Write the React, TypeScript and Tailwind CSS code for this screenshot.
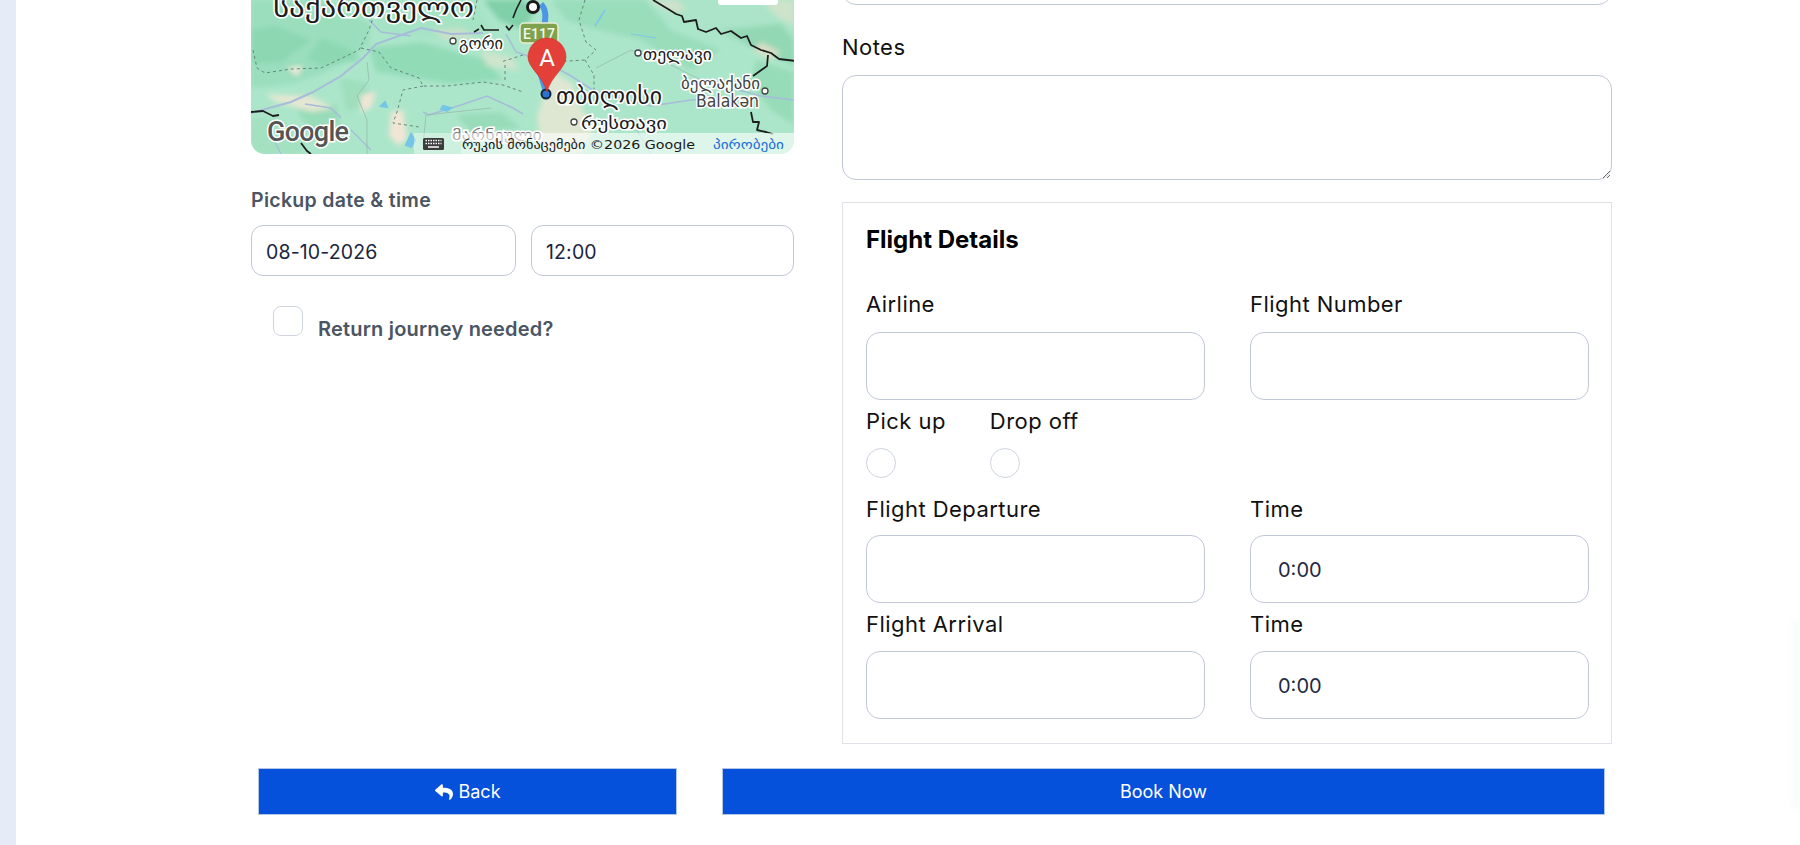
import { FaReply } from "react-icons/fa";

const inputClass =
  "h-[68px] w-full rounded-[14px] border border-[#c2c8d8] bg-white px-[27px] pt-[2px] text-[20px] text-[#1f2a44] outline-none";
const labelClass = "block text-[22px] leading-[30px] tracking-[0.45px] text-[#111111]";
const dateClass =
  "h-[51px] rounded-[12px] border border-[#c2c8d8] px-[14px] pt-[2px] text-[19.5px] tracking-[0.15px] text-[#1a2540] outline-none";

function MapLabel(props: {
  x: number;
  y: number;
  size: number;
  children: string;
  fill?: string;
  width?: number;
}) {
  return (
    <text
      x={props.x}
      y={props.y}
      fontSize={props.size}
      fontFamily="DejaVu Sans, sans-serif"
      fill={props.fill || "#1c1c1c"}
      stroke="#ffffff"
      strokeWidth={3}
      paintOrder="stroke"
      textLength={props.width}
      lengthAdjust="spacingAndGlyphs"
    >
      {props.children}
    </text>
  );
}

function TownDot({ x, y }: { x: number; y: number }) {
  return <circle cx={x} cy={y} r={3} fill="#ffffff" stroke="#444444" strokeWidth={1.3} />;
}

function MapView() {
  return (
    <div className="h-[154px] w-full overflow-hidden rounded-b-[14px]">
      <svg width="543" height="154" viewBox="0 0 543 154" className="block">
        <defs>
          <filter id="soft" x="-10%" y="-10%" width="120%" height="120%">
            <feGaussianBlur stdDeviation="2.5" />
          </filter>
        </defs>
        <rect width="543" height="154" fill="#ace6ca" />
        <g filter="url(#soft)">
          <path d="M0 0H70L120 24L118 45L95 62L70 74L40 84L0 88Z" fill="#9adebd" />
          <path d="M0 30L24 26L60 40L30 62L0 64Z" fill="#8dd7b2" />
          <path d="M70 38L100 50L110 60L70 66L56 58Z" fill="#8dd8b3" />
          <path d="M118 48L170 42L235 60L252 80L200 84L150 76L125 72Z" fill="#92dbb7" />
          <path d="M130 0H225L240 30L180 38L125 30Z" fill="#a4e3c4" />
          <path d="M232 0H272L285 10L272 30L248 20Z" fill="#80d0a9" />
          <path d="M300 0H395L420 30L470 50L440 70L390 40L340 28L315 20Z" fill="#99ddbb" />
          <path d="M395 0H543V60L510 50L450 30Z" fill="#abe4c8" />
          <path d="M470 30L530 24L543 40V66L505 50Z" fill="#92d8b4" />
          <path d="M505 60L543 72V125L520 110L500 85Z" fill="#97dcb8" />
          <path d="M0 118L28 118L52 145V154H0Z" fill="#a3e1c1" />
          <path d="M45 110L85 104L90 125L60 130Z" fill="#98dcb9" />
          <path d="M88 78L115 82L120 105L95 112Z" fill="#9fdfbe" />
          <path d="M205 115L250 112L270 128L220 132Z" fill="#98dcb9" />
          <path d="M230 50L262 58L268 70L235 66Z" fill="#e6e4cf" opacity="0.6" />
          <path d="M300 70L322 84L330 108L345 125L330 154H292L286 118Z" fill="#efe7d4" opacity="0.75" />
          <path d="M15 94L60 96L82 108L62 112L25 102Z" fill="#efe7d4" opacity="0.85" />
          <path d="M110 95L125 92L120 108L110 112Z" fill="#f0e5d5" />
          <path d="M140 112L152 110L156 138L148 146L138 136Z" fill="#f1e6d6" />
          <path d="M36 68L52 66L46 76Z" fill="#f1e9da" />
          <path d="M180 30L210 28L225 38L195 40Z" fill="#e3ddc9" opacity="0.6" />
          <path d="M510 42L530 52L520 60L502 50Z" fill="#e9dfc9" opacity="0.8" />
          <path d="M395 0H425L436 10L420 12Z" fill="#e8e0cd" opacity="0.6" />
          <path d="M510 0H543V26L525 16Z" fill="#e6e2cc" opacity="0.6" />
        </g>
        <g fill="none" stroke="#a6bcda" strokeWidth="1.5">
          <path d="M0 113L40 102L62 92L90 76L112 58L125 44L170 28L200 34L232 33" strokeWidth="2" />
          <path d="M118 20L130 32L160 36" />
          <path d="M54 104L80 108L90 118" />
          <path d="M172 112L178 115L210 105L236 96L262 108L272 114" />
          <path d="M255 34L265 52L295 62L320 76L345 92" />
          <path d="M345 92L400 106L440 100L470 98" />
          <path d="M100 130L120 150M18 130L30 154" strokeWidth="1.2" />
          <path d="M480 88L510 96L543 100" />
          <path d="M345 128L380 120L400 154" strokeWidth="1" />
        </g>
        <g fill="none" stroke="#93b3aa" strokeWidth="0.7">
          <path d="M116 62L118 80L106 96L116 120L116 154" />
          <path d="M172 145L175 115L240 108" />
          <path d="M345 68L380 50L420 65L470 90" />
        </g>
        <path d="M354 10L344 26" stroke="#7cc6ee" strokeWidth="1.5" fill="none" />
        <path d="M380 34L405 38" stroke="#7cc6ee" strokeWidth="1" fill="none" />
        <path d="M134 102L130 106L136 107Z M192 106L200 108L196 111L190 109Z M160 134L164 140L160 147L155 145Z" fill="#74c5e6" stroke="#74c5e6" strokeWidth="2" />
        <g fill="none" stroke="#5f7c74" strokeWidth="0.9" strokeDasharray="3 3">
          <path d="M2 50L6 68L14 73L40 69L70 68L108 50L118 30L122 18" />
          <path d="M110 48L128 52L140 68L168 78L172 86L196 86L232 82L252 85L272 92" />
          <path d="M172 86L152 90L146 112L142 123L168 127" />
          <path d="M226 0L222 20M254 65L254 80" />
          <path d="M334 0L328 20L335 42L345 50L334 60L300 62" />
          <path d="M272 55L250 62" />
          <path d="M334 60L343 75L343 90" />
        </g>
        <g fill="none" stroke="#1d1d1d" strokeWidth="1.8" strokeLinejoin="round">
          <path d="M402 0L417 9L425 14L431 16L433 22L445 20L447 29L455 32L465 28L470 34L480 31L490 38L496 36L500 45L510 50L520 53L528 59L545 61" />
          <path d="M517 55L516 66L502 76" />
          <path d="M500 112L502 122L508 122L506 130L515 132L522 134" />
          <path d="M0 112L12 111L22 116L28 115" />
          <path d="M50 143L56 151L60 154" />
          <path d="M223 32L228 29M230 25L233 30L248 30M255 26L258 30L262 25M270 0L265 10L262 18" strokeWidth="1.6" />
        </g>
        <path d="M290 4C296 10 295 20 292 30L292 42M288 68L295 92" stroke="#4d96e6" strokeWidth="6" fill="none" />
        <rect x="269" y="23" width="38" height="20" rx="4" fill="#7fa24e" stroke="#e9efd6" strokeWidth="1.5" />
        <text x="288" y="38.500" fontSize="14" textAnchor="middle" fill="#f4f7e8" fontFamily="Roboto, sans-serif" fontWeight="500">
          E117
        </text>
        <circle cx="282" cy="7" r="5.5" fill="#ffffff" stroke="#1a1a1a" strokeWidth="3" />
        <circle cx="295" cy="94" r="4.5" fill="#2a73cf" stroke="#10263f" strokeWidth="2" />
        <path d="M296 92C292 76 277 68 277 57A19 19 0 0 1 315 57C315 68 300 76 296 92Z" fill="#e4403a" stroke="#c9302c" strokeWidth="0.6" />
        <text x="296" y="66" fontSize="24" textAnchor="middle" fill="#ffffff" fontFamily="Roboto, sans-serif">
          A
        </text>
        <MapLabel x={22} y={17} size={27} width={201}>საქართველო</MapLabel>
        <TownDot x={202} y={41} />
        <MapLabel x={208} y={49} size={16} width={44}>გორი</MapLabel>
        <TownDot x={387} y={53} />
        <MapLabel x={392} y={60} size={16} width={69}>თელავი</MapLabel>
        <MapLabel x={430} y={89} size={16} width={79} fill="#444444">ბელაქანი</MapLabel>
        <TownDot x={514} y={91} />
        <MapLabel x={445} y={107} size={17} width={63} fill="#444444">Balakən</MapLabel>
        <MapLabel x={305} y={104} size={23} width={106}>თბილისი</MapLabel>
        <TownDot x={323} y={122} />
        <MapLabel x={330} y={129} size={16} width={86}>რუსთავი</MapLabel>
        <MapLabel x={201} y={140} size={15} width={90} fill="#777777">მარნეული</MapLabel>
        <text x="16" y="141" fontSize="27" fontWeight="500" fontFamily="Roboto, sans-serif" fill="#555555" stroke="#ffffff" strokeWidth="3" paintOrder="stroke" textLength="82">
          Google
        </text>
        <rect x="163" y="133" width="47" height="21" fill="#ffffff" opacity="0.4" />
        <rect x="210" y="133" width="238" height="21" fill="#ffffff" opacity="0.6" />
        <rect x="448" y="133" width="95" height="21" fill="#ffffff" opacity="0.6" />
        <rect x="172" y="138" width="21" height="12" rx="1.5" fill="#3c3c3c" />
        <path d="M174.500 140.500H190.500M174.500 143.500H190.500" stroke="#ffffff" strokeWidth="1.4" strokeDasharray="1.5 1" />
        <path d="M177 147H188" stroke="#ffffff" strokeWidth="1.4" />
        <text x="211" y="149" fontSize="13" fontFamily="DejaVu Sans, sans-serif" fill="#1a1a1a" textLength="233" lengthAdjust="spacingAndGlyphs">
          რუკის მონაცემები ©2026 Google
        </text>
        <text x="462" y="149" fontSize="13" fontFamily="DejaVu Sans, sans-serif" fill="#1a6ed8" textLength="71" lengthAdjust="spacingAndGlyphs">
          პირობები
        </text>
        <rect x="467" y="-8" width="60" height="13" rx="3" fill="#ffffff" />
      </svg>
    </div>
  );
}

export default function App() {
  return (
    <div className="relative flex h-[845px] overflow-hidden bg-white font-[family-name:Inter,sans-serif]">
      <div className="w-4 shrink-0 bg-[#e5ecf7]" />
      <div className="pl-[235px]">
        <div className="flex h-[743px] gap-[48px]">
          <div className="w-[543px]">
            <MapView />
            <label className="mt-[32px] block text-[19.5px] font-semibold leading-[28px] tracking-[0.3px] text-[#4b5563]">
              Pickup date &amp; time
            </label>
            <div className="mt-[11px] flex gap-[15px]">
              <input readOnly defaultValue="08-10-2026" className={`${dateClass} w-[265px]`} />
              <input readOnly defaultValue="12:00" className={`${dateClass} w-[263px]`} />
            </div>
            <div className="ml-[22px] mt-[30px] flex gap-[15px]">
              <input
                type="checkbox"
                className="h-[30px] w-[30px] appearance-none rounded-[8px] border border-[#cfd4df] bg-white"
              />
              <span className="mt-[9px] text-[20px] font-semibold leading-[28px] tracking-[0.2px] text-[#4b5563]">
                Return journey needed?
              </span>
            </div>
          </div>
          <div className="w-[770px]">
            <div className="-mt-[60px] h-[65px] rounded-[14px] border border-[#c2c8d8]" />
            <label className={`${labelClass} mt-[27px]`}>Notes</label>
            <textarea
              readOnly
              className="mt-[13px] block h-[105px] w-full rounded-[14px] border border-[#c2c8d8] bg-white outline-none"
            />
            <div className="mt-[22px] h-[542px] border border-[#dfe2e8] px-[23px] pt-[21px]">
              <h3 className="text-[24px] font-bold leading-[32px] text-black">Flight Details</h3>
              <div className="mt-[33px] grid grid-cols-[339px_339px] gap-x-[45px]">
                <div>
                  <label className={labelClass}>Airline</label>
                  <input readOnly className={`${inputClass} mt-[13px]`} />
                </div>
                <div>
                  <label className={labelClass}>Flight Number</label>
                  <input readOnly className={`${inputClass} mt-[13px]`} />
                </div>
                <div className="col-span-2 mt-[6px] flex gap-[44px]">
                  <div>
                    <label className={labelClass}>Pick up</label>
                    <input
                      type="radio"
                      name="flight_type"
                      className="mt-[12px] block h-[30px] w-[30px] appearance-none rounded-full border border-[#cfd4df] bg-white"
                    />
                  </div>
                  <div>
                    <label className={labelClass}>Drop off</label>
                    <input
                      type="radio"
                      name="flight_type"
                      className="mt-[12px] block h-[30px] w-[30px] appearance-none rounded-full border border-[#cfd4df] bg-white"
                    />
                  </div>
                </div>
                <div className="mt-[16px]">
                  <label className={labelClass}>Flight Departure</label>
                  <input readOnly className={`${inputClass} mt-[11px]`} />
                </div>
                <div className="mt-[16px]">
                  <label className={labelClass}>Time</label>
                  <input readOnly defaultValue="0:00" className={`${inputClass} mt-[11px]`} />
                </div>
                <div className="mt-[6px]">
                  <label className={labelClass}>Flight Arrival</label>
                  <input readOnly className={`${inputClass} mt-[12px]`} />
                </div>
                <div className="mt-[6px]">
                  <label className={labelClass}>Time</label>
                  <input readOnly defaultValue="0:00" className={`${inputClass} mt-[12px]`} />
                </div>
              </div>
            </div>
          </div>
        </div>
        <div className="ml-[7px] mt-[25px] flex gap-[45px]">
          <button className="flex h-[47px] w-[419px] items-center justify-center gap-[4px] border border-[#b4c6e6] bg-[#0551dc] text-[18px] text-white">
            <FaReply className="h-[18px] w-[20px]" />
            Back
          </button>
          <button className="h-[47px] w-[883px] border border-[#b4c6e6] bg-[#0551dc] text-[18px] text-white">
            Book Now
          </button>
        </div>
      </div>
      <div className="absolute right-0 top-[620px] h-[190px] w-[12px] bg-gradient-to-r from-transparent to-[#f4fcf8] blur-[2px]" />
    </div>
  );
}
